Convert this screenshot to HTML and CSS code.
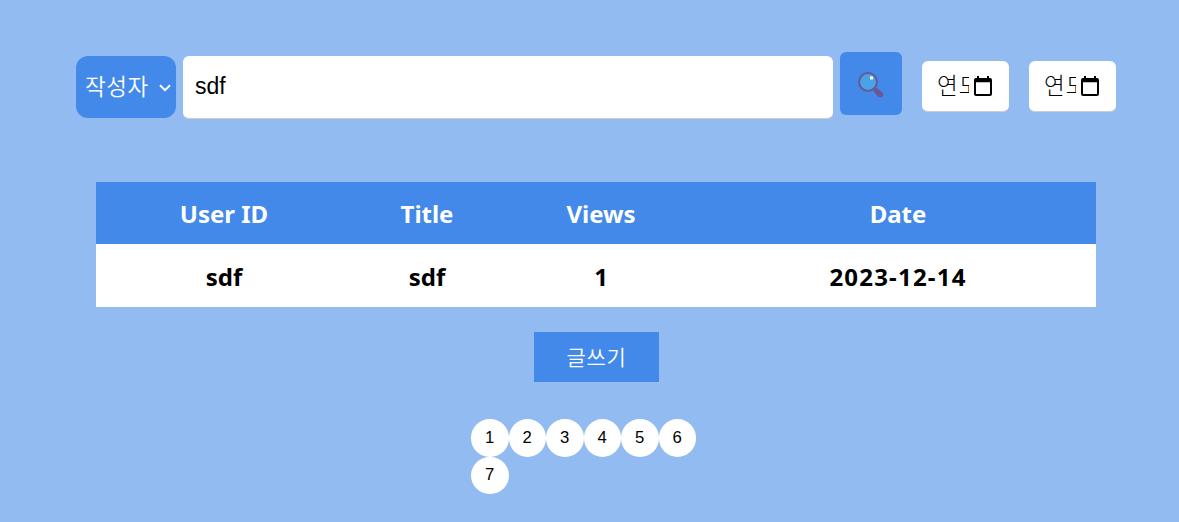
FILE: index.html
```html
<!DOCTYPE html>
<html lang="ko">
<head>
  <meta charset="UTF-8" />
  <meta name="viewport" content="width=device-width, initial-scale=1.0"/>
  <title>Board</title>
  <link rel="stylesheet" href="styles.css">
</head>
<body>
  <form class="search-bar">
    <button type="button" class="search-type">
      <span>작성자</span>
      <svg class="arrow" viewBox="0 0 12 8"><path d="M1 1.2 L6 6.2 L11 1.2" /></svg>
    </button>
    <input type="text" class="search-input" value="sdf" />
    <button type="submit" class="search-btn">
      <svg class="search-icon" viewBox="0 0 26 26">
        <path class="handle" d="M15 17.5 L18 15.5 L24 20 Q26.5 22.5 24.6 24.6 Q22.3 26.5 19.8 24.5 L16.2 20 Z" />
        <circle class="lens" cx="10" cy="10" r="8.9" />
        <rect class="shine" x="12" y="4.3" width="3.2" height="3.2" rx="1" />
      </svg>
    </button>
    <div class="date-input">
      <span class="date-text">연도</span>
      <svg class="calendar" viewBox="0 0 18 20"><path d="M3 0h2v2h8V0h2v2h1a2 2 0 0 1 2 2v14a2 2 0 0 1-2 2H2a2 2 0 0 1-2-2V4a2 2 0 0 1 2-2h1zM2 6.3V18h14V6.3z" /></svg>
    </div>
    <div class="date-input">
      <span class="date-text">연도</span>
      <svg class="calendar" viewBox="0 0 18 20"><path d="M3 0h2v2h8V0h2v2h1a2 2 0 0 1 2 2v14a2 2 0 0 1-2 2H2a2 2 0 0 1-2-2V4a2 2 0 0 1 2-2h1zM2 6.3V18h14V6.3z" /></svg>
    </div>
  </form>

  <table class="board">
    <thead>
      <tr>
        <th class="col-user">User ID</th>
        <th class="col-title">Title</th>
        <th class="col-views">Views</th>
        <th class="col-date">Date</th>
      </tr>
    </thead>
    <tbody>
      <tr>
        <td>sdf</td>
        <td>sdf</td>
        <td>1</td>
        <td class="date">2023-12-14</td>
      </tr>
    </tbody>
  </table>

  <button type="button" class="write-btn">글쓰기</button>

  <div class="pagination">
    <button type="button">1</button>
    <button type="button">2</button>
    <button type="button">3</button>
    <button type="button">4</button>
    <button type="button">5</button>
    <button type="button">6</button>
    <button type="button">7</button>
  </div>
</body>
</html>
```
FILE: styles.css
```css
body {
  margin: 0;
  background-color: #91bbf1;
  font-family: "Noto Sans", "Noto Sans CJK KR", sans-serif;
}
button {
  border: none;
  padding: 0;
  cursor: pointer;
}

/* Search bar */
.search-bar {
  display: flex;
  align-items: flex-start;
  height: 130px;
  padding: 52px 0 0 76px;
}
.search-type {
  display: flex;
  align-items: center;
  width: 100px;
  height: 62px;
  margin: 4px 7px 0 0;
  padding: 0 5px 4px 9px;
  box-sizing: border-box;
  justify-content: space-between;
  border-radius: 12px;
  background-color: #4389e9;
  color: white;
  font-family: "Noto Sans CJK KR", sans-serif;
  font-size: 22.5px;
  font-weight: 350;
  letter-spacing: 0.6px;
}
.arrow {
  width: 12px;
  height: 8px;
  margin-top: 6px;
  fill: none;
  stroke: white;
  stroke-width: 2;
}
.search-input {
  width: 650px;
  height: 63px;
  margin: 4px 7px 0 0;
  padding: 0 12px 2px;
  box-sizing: border-box;
  border: none;
  border-bottom: 1px solid #ccc;
  border-radius: 6px;
  color: black;
  font-family: "Liberation Sans", sans-serif;
  font-size: 23px;
}
.search-btn {
  width: 62px;
  height: 63px;
  margin-right: 20px;
  border-radius: 6px;
  background-color: #4389e9;
}
.search-icon {
  display: block;
  width: 26px;
  height: 26px;
  margin: 2px auto 0;
}
.handle {
  fill: #675a93;
}
.lens {
  fill: #4aa3e8;
  stroke: #675a93;
  stroke-width: 2;
}
.shine {
  fill: white;
}
.date-input {
  display: flex;
  align-items: center;
  width: 87px;
  height: 51px;
  margin: 9px 20px 0 0;
  padding: 0 0 1px 15px;
  box-sizing: border-box;
  border-bottom: 1px solid #ccc;
  border-radius: 6px;
  background-color: white;
}
.date-text {
  width: 32px;
  margin: 0 5px 3px 0;
  overflow: hidden;
  white-space: nowrap;
  font-family: "Noto Sans CJK KR", sans-serif;
  font-size: 22.5px;
  font-weight: 300;
  letter-spacing: 1px;
}
.calendar {
  flex: none;
  width: 18px;
  height: 20px;
}

/* Board table */
.board {
  width: 1000px;
  margin-left: 96px;
  border-collapse: collapse;
  table-layout: fixed;
  background-color: white;
  text-align: center;
  font-size: 24px;
  font-weight: bold;
}
.board th {
  height: 62px;
  padding: 0;
  box-sizing: border-box;
  background-color: #4389e9;
  color: white;
}
.board td {
  height: 63px;
  padding: 2px 0 0;
  box-sizing: border-box;
}
.board .date {
  letter-spacing: 1.2px;
}
.col-user {
  width: 256px;
}
.col-title {
  width: 150px;
}
.col-views {
  width: 198px;
}

.write-btn {
  display: block;
  width: 125px;
  height: 50px;
  margin: 25px 0 0 534px;
  padding-bottom: 3px;
  background-color: #4389e9;
  color: white;
  font-family: "Noto Sans CJK KR", sans-serif;
  font-size: 21px;
  font-weight: 350;
  letter-spacing: 0.6px;
}

/* Page numbers */
.pagination {
  display: flex;
  flex-wrap: wrap;
  width: 225px;
  margin: 37px 0 0 471px;
}
.pagination button {
  width: 37.5px;
  height: 37.5px;
  border-radius: 50%;
  background-color: white;
  color: black;
  font-family: "Liberation Sans", sans-serif;
  font-size: 16.7px;
}
```
